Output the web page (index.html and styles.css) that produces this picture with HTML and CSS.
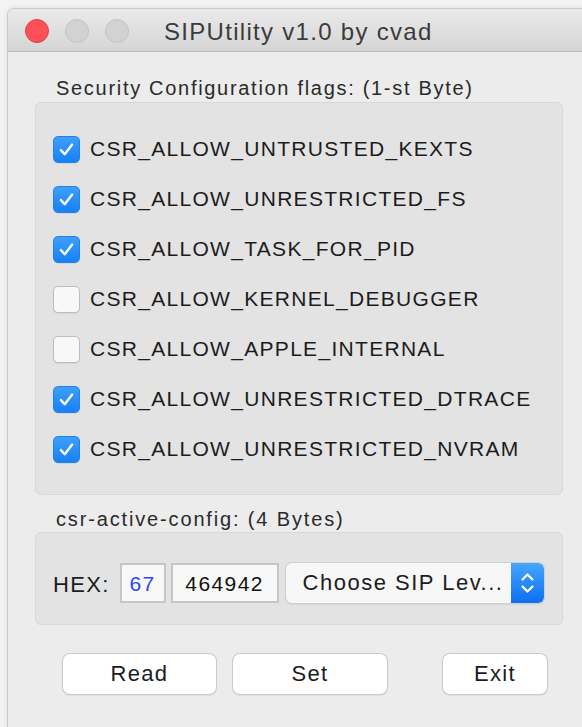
FILE: index.html
```html
<!DOCTYPE html>
<html lang="en">
<head>
<meta charset="utf-8">
<title>SIPUtility v1.0 by cvad</title>
<link rel="stylesheet" href="styles.css">
</head>
<body>
<div class="window">
  <div class="titlebar">
    <div class="lights">
      <span class="light close"></span>
      <span class="light"></span>
      <span class="light"></span>
    </div>
    <div class="title">SIPUtility v1.0 by cvad</div>
  </div>

  <div class="content">
    <div class="heading">Security Configuration flags: (1-st Byte)</div>
    <div class="group flags">
      <label class="flag"><span class="check on"><svg viewBox="0 0 27 27"><path d="M7.5 14.2 L11.6 18.6 L19.6 8.2" /></svg></span>CSR_ALLOW_UNTRUSTED_KEXTS</label>
      <label class="flag"><span class="check on"><svg viewBox="0 0 27 27"><path d="M7.5 14.2 L11.6 18.6 L19.6 8.2" /></svg></span>CSR_ALLOW_UNRESTRICTED_FS</label>
      <label class="flag"><span class="check on"><svg viewBox="0 0 27 27"><path d="M7.5 14.2 L11.6 18.6 L19.6 8.2" /></svg></span>CSR_ALLOW_TASK_FOR_PID</label>
      <label class="flag"><span class="check"></span>CSR_ALLOW_KERNEL_DEBUGGER</label>
      <label class="flag"><span class="check"></span>CSR_ALLOW_APPLE_INTERNAL</label>
      <label class="flag"><span class="check on"><svg viewBox="0 0 27 27"><path d="M7.5 14.2 L11.6 18.6 L19.6 8.2" /></svg></span>CSR_ALLOW_UNRESTRICTED_DTRACE</label>
      <label class="flag"><span class="check on"><svg viewBox="0 0 27 27"><path d="M7.5 14.2 L11.6 18.6 L19.6 8.2" /></svg></span>CSR_ALLOW_UNRESTRICTED_NVRAM</label>
    </div>

    <div class="heading second">csr-active-config: (4 Bytes)</div>
    <div class="group config">
      <span class="hex-label">HEX:</span>
      <span class="field byte">67</span>
      <span class="field rest">464942</span>
      <div class="popup">
        <span class="popup-text">Choose SIP Lev...</span>
        <span class="popup-arrows"><svg viewBox="0 0 33 40"><path d="M11.5 16.5 L16.5 11.5 L21.5 16.5 M11.5 23.5 L16.5 28.5 L21.5 23.5" /></svg></span>
      </div>
    </div>

    <div class="buttons">
      <button class="btn read">Read</button>
      <button class="btn set">Set</button>
      <button class="btn exit">Exit</button>
    </div>
  </div>
</div>
</body>
</html>
```

FILE: styles.css
```css
html, body {
  margin: 0;
  padding: 0;
}

body {
  width: 582px;
  height: 727px;
  overflow: hidden;
  background: #f3f3f3;
  font-family: "Liberation Sans", Arial, sans-serif;
  color: #1e1e1e;
}

.window {
  margin: 9px 0 0 8px;
  width: 600px;
  height: 740px;
  background: #ececec;
  border-radius: 6px 6px 0 0;
  box-shadow: 0 0 0 1px #c9c9c9, 0 0 6px rgba(0, 0, 0, 0.12);
}

/* title bar */
.titlebar {
  height: 42px;
  display: flex;
  align-items: center;
  border-radius: 6px 6px 0 0;
  background: linear-gradient(#ebeaeb, #d6d5d6);
  border-bottom: 1px solid #bdbcbd;
}

.lights {
  display: flex;
  gap: 16px;
  padding-left: 17px;
  margin-top: 2px;
}

.light {
  width: 24px;
  height: 24px;
  border-radius: 50%;
  box-sizing: border-box;
  background: #d3d2d3;
  border: 1px solid #c4c3c4;
}

.light.close {
  background: #fc4f57;
  border-color: #e5404a;
}

.title {
  margin-left: 35px;
  margin-top: 4px;
  font-size: 24px;
  letter-spacing: 1.3px;
  color: #3b3b3b;
}

/* body of window */
.content {
  padding: 26px 0 0 27px;
}

.heading {
  height: 20px;
  line-height: 20px;
  padding-left: 21px;
  font-size: 20px;
  letter-spacing: 1.7px;
  color: #2a2a2a;
  margin-bottom: 4px;
}

.heading.second {
  margin-top: 14px;
  margin-bottom: 3px;
  letter-spacing: 1.85px;
}

.group {
  width: 528px;
  box-sizing: border-box;
  background: #e3e3e3;
  border: 1px solid #d8d8d8;
  border-radius: 6px;
}

.flags {
  height: 393px;
  padding: 21px 0 0 17px;
}

.flag {
  height: 50px;
  display: flex;
  align-items: center;
  gap: 10px;
  font-size: 21px;
  letter-spacing: 1.3px;
  color: #1c1c1c;
}

.check {
  width: 27px;
  height: 27px;
  box-sizing: border-box;
  border-radius: 5px;
  background: #f8f8f8;
  border: 1px solid #bdbdbd;
  box-shadow: 0 1px 1px rgba(0, 0, 0, 0.06);
  display: flex;
}

.check.on {
  background: linear-gradient(#3ea0fc, #1681f5);
  border: 1px solid #1f82ec;
}

.check svg {
  width: 100%;
  height: 100%;
}

.check path {
  fill: none;
  stroke: #ffffff;
  stroke-width: 2.6;
  stroke-linecap: round;
  stroke-linejoin: round;
}

/* hex row */
.config {
  height: 93px;
  padding: 30px 0 0 17px;
  display: flex;
  align-items: flex-start;
}

.hex-label {
  height: 40px;
  line-height: 40px;
  font-size: 22px;
  letter-spacing: 1.3px;
  color: #1c1c1c;
  margin-right: 10px;
  margin-top: 2px;
}

.field {
  height: 40px;
  box-sizing: border-box;
  border: 2px solid #c6c6c6;
  background: #f8f8f8;
  font-size: 21px;
  letter-spacing: 1.4px;
  line-height: 38px;
  text-align: center;
  margin-right: 5px;
}

.field.byte {
  width: 46px;
  color: #2d46f0;
}

.field.rest {
  width: 108px;
  color: #111111;
  margin-right: 7px;
}

.popup {
  width: 258px;
  height: 40px;
  display: flex;
  border-radius: 6px;
  background: #f7f7f7;
  box-shadow: 0 0 0 1px #cfcfcf, 0 1px 2px rgba(0, 0, 0, 0.18);
}

.popup-text {
  flex: 1;
  font-size: 22px;
  letter-spacing: 1.5px;
  line-height: 40px;
  padding-left: 17px;
  color: #1c1c1c;
  white-space: nowrap;
}

.popup-arrows {
  width: 33px;
  height: 40px;
  border-radius: 0 6px 6px 0;
  background: linear-gradient(#45a6fd, #0d6ff2);
  display: flex;
}

.popup-arrows svg {
  width: 100%;
  height: 100%;
}

.popup-arrows path {
  fill: none;
  stroke: #ffffff;
  stroke-width: 2.2;
  stroke-linecap: round;
  stroke-linejoin: round;
}

/* bottom buttons */
.buttons {
  display: flex;
  margin-top: 29px;
  padding-left: 28px;
}

.btn {
  height: 40px;
  box-sizing: border-box;
  border: none;
  border-radius: 7px;
  background: #ffffff;
  box-shadow: 0 0 0 1px #cbcbcb, 0 1px 2px rgba(0, 0, 0, 0.2);
  font-family: "Liberation Sans", Arial, sans-serif;
  font-size: 22px;
  letter-spacing: 1.3px;
  color: #1c1c1c;
  padding: 0;
}

.btn.read {
  width: 153px;
}

.btn.set {
  width: 154px;
  margin-left: 17px;
}

.btn.exit {
  width: 104px;
  margin-left: 56px;
}
```
